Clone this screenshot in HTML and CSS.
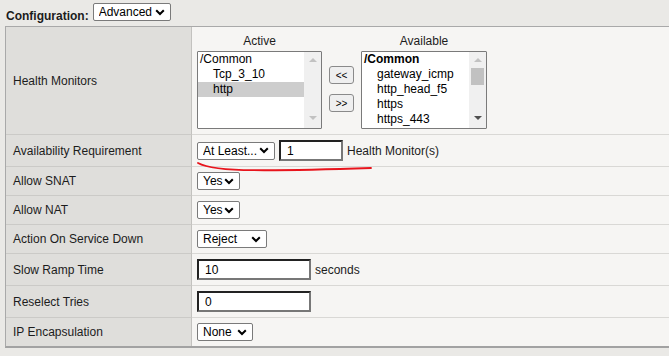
FILE: index.html
```html
<!DOCTYPE html>
<html lang="en">
<head>
    <meta charset="UTF-8">
    <meta name="viewport" content="width=device-width, initial-scale=1.0">
    <title>Pool Properties</title>
    <link rel="stylesheet" href="styles.css">
</head>
<body>
    <div class="config-bar">
        <label for="config">Configuration:</label>
        <select id="config" class="sel sel-config"><option>Advanced</option></select>
    </div>

    <table class="props">
        <tr class="row-hm">
            <td class="label">Health Monitors</td>
            <td class="value value-top">
                <div class="picker">
                    <div class="pick-col">
                        <div class="pick-head">Active</div>
                        <div class="listbox list-active">
                            <div class="list-items">
                                <div class="item">/Common</div>
                                <div class="item sub">Tcp_3_10</div>
                                <div class="item sub selected">http</div>
                            </div>
                            <div class="scrollbar">
                                <span class="arrow-up light"></span>
                                <span class="arrow-down light"></span>
                            </div>
                        </div>
                    </div>
                    <div class="pick-btns">
                        <button class="move-btn">&lt;&lt;</button>
                        <button class="move-btn">&gt;&gt;</button>
                    </div>
                    <div class="pick-col">
                        <div class="pick-head">Available</div>
                        <div class="listbox list-avail">
                            <div class="list-items">
                                <div class="item group">/Common</div>
                                <div class="item sub">gateway_icmp</div>
                                <div class="item sub">http_head_f5</div>
                                <div class="item sub">https</div>
                                <div class="item sub">https_443</div>
                            </div>
                            <div class="scrollbar">
                                <span class="arrow-up light"></span>
                                <span class="thumb"></span>
                                <span class="arrow-down"></span>
                            </div>
                        </div>
                    </div>
                </div>
            </td>
        </tr>
        <tr class="row-tall">
            <td class="label">Availability Requirement</td>
            <td class="value marked">
                <div class="inline">
                    <select class="sel sel-least"><option>At Least...</option></select>
                    <input type="text" class="txt txt-short" value="1">
                    <span class="unit">Health Monitor(s)</span>
                </div>
                <!-- hand-drawn red underline from the screenshot -->
                <svg class="scribble" width="200" height="40" viewBox="0 0 200 40">
                    <path d="M6,28 C14,32.5 34,35 62,35.2 S150,34 179,33" fill="none" stroke="#e8141c" stroke-width="1.8" stroke-linecap="round"/>
                </svg>
            </td>
        </tr>
        <tr>
            <td class="label">Allow SNAT</td>
            <td class="value"><select class="sel sel-yes"><option>Yes</option></select></td>
        </tr>
        <tr>
            <td class="label">Allow NAT</td>
            <td class="value"><select class="sel sel-yes"><option>Yes</option></select></td>
        </tr>
        <tr>
            <td class="label">Action On Service Down</td>
            <td class="value"><select class="sel sel-reject"><option>Reject</option></select></td>
        </tr>
        <tr class="row-tall">
            <td class="label">Slow Ramp Time</td>
            <td class="value">
                <div class="inline">
                    <input type="text" class="txt txt-long" value="10">
                    <span class="unit">seconds</span>
                </div>
            </td>
        </tr>
        <tr class="row-tall">
            <td class="label">Reselect Tries</td>
            <td class="value"><input type="text" class="txt txt-long" value="0"></td>
        </tr>
        <tr class="row-last">
            <td class="label">IP Encapsulation</td>
            <td class="value"><select class="sel sel-none"><option>None</option></select></td>
        </tr>
    </table>
</body>
</html>
```

FILE: styles.css
```css
body {
    margin: 0;
    background-color: #eae9e6;
    font-family: "Liberation Sans", Arial, sans-serif;
    font-size: 12px;
    color: #1c1c1c;
    overflow: hidden;
}

.config-bar {
    display: flex;
    align-items: flex-start;
    height: 26px;
    padding: 3px 0 0 6px;
    box-sizing: border-box;
}
.config-bar label {
    font-weight: bold;
    line-height: 14px;
    margin-top: 6px;
    margin-right: 4px;
}

/* selects */
.sel {
    appearance: none;
    -webkit-appearance: none;
    height: 18px;
    padding: 0 0 0 5px;
    border: 1px solid #7a7a7a;
    border-radius: 2px;
    background: #fff url("data:image/svg+xml,%3Csvg xmlns='http://www.w3.org/2000/svg' width='10' height='7'%3E%3Cpath d='M1.2 1.2l3.8 3.8l3.8-3.8' fill='none' stroke='%23000' stroke-width='2'/%3E%3C/svg%3E") no-repeat right 5px center;
    font-family: "Liberation Sans", Arial, sans-serif;
    font-size: 12px;
    color: #000;
    box-sizing: border-box;
}
.sel-config { width: 78px; }
.sel-least { width: 78px; }
.sel-yes { width: 43px; }
.sel-reject { width: 70px; }
.sel-none { width: 56px; }

/* text inputs */
.txt {
    height: 21px;
    padding: 0 0 0 6px;
    border-style: solid;
    border-width: 2px;
    border-color: #222 #777 #777 #222;
    background: #fff;
    font-family: "Liberation Sans", Arial, sans-serif;
    font-size: 12px;
    color: #000;
    box-sizing: border-box;
}
.txt-short { width: 64px; margin-left: 4px; }
.txt-long { width: 114px; }

.inline {
    display: flex;
    align-items: center;
}
.unit {
    margin-left: 4px;
}

/* properties table */
.props {
    margin-left: 5px;
    width: 700px;
    border-collapse: separate;
    border-spacing: 0;
    border-top: 1px solid #a9a9a9;
    border-left: 1px solid #a9a9a9;
    border-bottom: 2px solid #a2a2a2;
    box-shadow: 0 1px 0 #d3d2cf;
}
.props tr { height: 29px; }
.props tr.row-hm { height: 108px; }
.props tr.row-tall { height: 32px; }
.props tr.row-last { height: 28px; }

.props td {
    padding: 0;
    vertical-align: middle;
    border-bottom: 1px solid #d9d8d5;
}
.props tr.row-last td { border-bottom: none; }

.label {
    width: 178px;
    padding-left: 7px !important;
    background-color: #dfdedb;
    border-right: 1px solid #c3c2bf;
    border-bottom-color: #cbcac7 !important;
}
.value {
    padding-left: 5px !important;
    background-color: #f6f5f3;
}
.value-top {
    vertical-align: top !important;
    padding-top: 7px !important;
}
.marked {
    position: relative;
}
.scribble {
    position: absolute;
    left: 0;
    top: 0;
    pointer-events: none;
}

/* health monitor picker */
.picker {
    display: flex;
    align-items: flex-start;
}
.pick-head {
    line-height: 15px;
    text-align: center;
    margin-bottom: 2px;
    color: #1c1c1c;
}
.listbox {
    display: flex;
    height: 78px;
    border: 1px solid #7a7a7a;
    border-radius: 1px;
    background: #fff;
    box-sizing: border-box;
}
.list-active { width: 125px; }
.list-avail { width: 126px; }
.list-items {
    flex: 1;
    overflow: hidden;
}
.item {
    line-height: 15px;
    padding-left: 2px;
    white-space: nowrap;
    color: #000;
}
.item.group { font-weight: bold; }
.item.sub { padding-left: 15px; }
.item.selected { background-color: #cdcdcd; }

.scrollbar {
    width: 17px;
    display: flex;
    flex-direction: column;
    align-items: center;
    padding: 6px 0 8px;
    background-color: #f0f0f0;
    box-sizing: border-box;
}
.arrow-up, .arrow-down {
    width: 0;
    height: 0;
    border-left: 4px solid transparent;
    border-right: 4px solid transparent;
}
.arrow-up { border-bottom: 4px solid #a3a3a3; }
.arrow-down { border-top: 4px solid #505050; margin-top: auto; }
.arrow-up.light { border-bottom-color: #c2c2c2; }
.arrow-down.light { border-top-color: #c2c2c2; }
.thumb {
    width: 13px;
    height: 17px;
    margin-top: 6px;
    background-color: #c1c1c1;
}

.pick-btns {
    display: flex;
    flex-direction: column;
    gap: 10px;
    margin: 32px 7px 0;
}
.move-btn {
    width: 25px;
    height: 18px;
    padding: 0;
    border: 1px solid #8a8a8a;
    border-radius: 3px;
    background-color: #efefef;
    font-family: "Liberation Sans", Arial, sans-serif;
    font-size: 10px;
    color: #000;
}
```
